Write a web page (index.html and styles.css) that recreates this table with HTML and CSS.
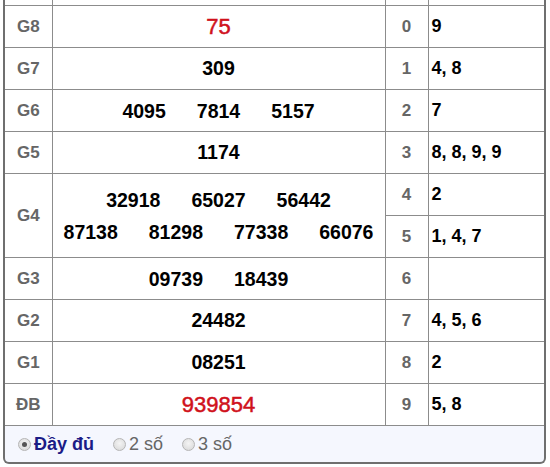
FILE: index.html
```html
<!DOCTYPE html>
<html lang="vi">
<head>
<meta charset="utf-8">
<title>Kết quả xổ số</title>
<link rel="stylesheet" href="styles.css">
</head>
<body>
<div class="box">
  <table class="kq">
    <colgroup>
      <col class="c-prize"><col class="c-nums"><col class="c-head"><col class="c-tail">
    </colgroup>
    <tr class="cut"><td></td><td></td><td></td><td></td></tr>
    <tr>
      <td class="prize">G8</td>
      <td class="nums"><span class="red">75</span></td>
      <td class="head">0</td><td class="tail">9</td>
    </tr>
    <tr>
      <td class="prize">G7</td>
      <td class="nums"><span>309</span></td>
      <td class="head">1</td><td class="tail">4, 8</td>
    </tr>
    <tr>
      <td class="prize">G6</td>
      <td class="nums"><div class="line"><span>4095</span><span>7814</span><span>5157</span></div></td>
      <td class="head">2</td><td class="tail">7</td>
    </tr>
    <tr>
      <td class="prize">G5</td>
      <td class="nums"><span>1174</span></td>
      <td class="head">3</td><td class="tail">8, 8, 9, 9</td>
    </tr>
    <tr>
      <td class="prize" rowspan="2">G4</td>
      <td class="nums multi" rowspan="2">
        <div class="line"><span>32918</span><span>65027</span><span>56442</span></div>
        <div class="line"><span>87138</span><span>81298</span><span>77338</span><span>66076</span></div>
      </td>
      <td class="head">4</td><td class="tail">2</td>
    </tr>
    <tr>
      <td class="head">5</td><td class="tail">1, 4, 7</td>
    </tr>
    <tr>
      <td class="prize">G3</td>
      <td class="nums"><div class="line"><span>09739</span><span>18439</span></div></td>
      <td class="head">6</td><td class="tail"></td>
    </tr>
    <tr>
      <td class="prize">G2</td>
      <td class="nums"><span>24482</span></td>
      <td class="head">7</td><td class="tail">4, 5, 6</td>
    </tr>
    <tr>
      <td class="prize">G1</td>
      <td class="nums"><span>08251</span></td>
      <td class="head">8</td><td class="tail">2</td>
    </tr>
    <tr class="last">
      <td class="prize">ĐB</td>
      <td class="nums"><span class="red big">939854</span></td>
      <td class="head">9</td><td class="tail">5, 8</td>
    </tr>
  </table>
  <div class="opts">
    <label class="opt on"><span class="radio"></span>Đầy đủ</label>
    <label class="opt"><span class="radio"></span>2 số</label>
    <label class="opt"><span class="radio"></span>3 số</label>
  </div>
</div>
</body>
</html>
```

FILE: styles.css
```css
html, body {
  margin: 0;
  padding: 0;
  background: #fff;
}

body {
  font-family: "Liberation Sans", Arial, sans-serif;
}

.box {
  margin-left: 3px;
  width: 539px;
  border: 2px solid #6f6f6f;
  border-top: none;
  border-radius: 0 0 6px 6px;
  overflow: hidden;
  background: #f5f7fe;
}

.kq {
  width: 100%;
  border-collapse: collapse;
  table-layout: fixed;
  background: #fff;
}

.c-prize { width: 47px; }
.c-nums { width: 333px; }
.c-head { width: 43px; }
.c-tail { width: 116px; }

.kq td {
  border: 1px solid #8c8c8c;
  height: 41px;
  padding: 0;
  vertical-align: middle;
}

.kq tr td:first-child { border-left: none; }
.kq tr td.tail { border-right: none; }

.kq tr.cut td {
  height: 5px;
  border-top: none;
}

.prize {
  text-align: center;
  font-weight: bold;
  font-size: 17px;
  color: #666;
}

.nums {
  text-align: center;
  font-weight: bold;
  font-size: 19.5px;
  color: #000;
}

.line {
  display: flex;
  justify-content: center;
  gap: 31px;
  line-height: 32px;
}

.red {
  color: #d0111b;
  font-weight: normal;
  font-size: 22px;
  -webkit-text-stroke: 0.5px #d0111b;
}

.head {
  text-align: center;
  font-weight: bold;
  font-size: 17px;
  color: #666;
}

.tail {
  text-align: left;
  padding-left: 3px !important;
  font-weight: bold;
  font-size: 18px;
  color: #000;
}

.opts {
  display: flex;
  align-items: center;
  gap: 19px;
  height: 36px;
  padding-left: 13px;
  font-size: 18px;
  color: #666;
}

.opt {
  display: flex;
  align-items: center;
  gap: 3px;
}

.opt.on {
  color: #1b1b86;
  font-weight: bold;
}

.radio {
  box-sizing: border-box;
  width: 13px;
  height: 13px;
  border-radius: 50%;
  border: 1px solid #b5b5b5;
  background: radial-gradient(circle at 50% 40%, #f4f4f4, #d6d6d6);
  display: flex;
  align-items: center;
  justify-content: center;
}

.opt.on .radio::after {
  content: "";
  width: 5px;
  height: 5px;
  border-radius: 50%;
  background: #555;
}
```
